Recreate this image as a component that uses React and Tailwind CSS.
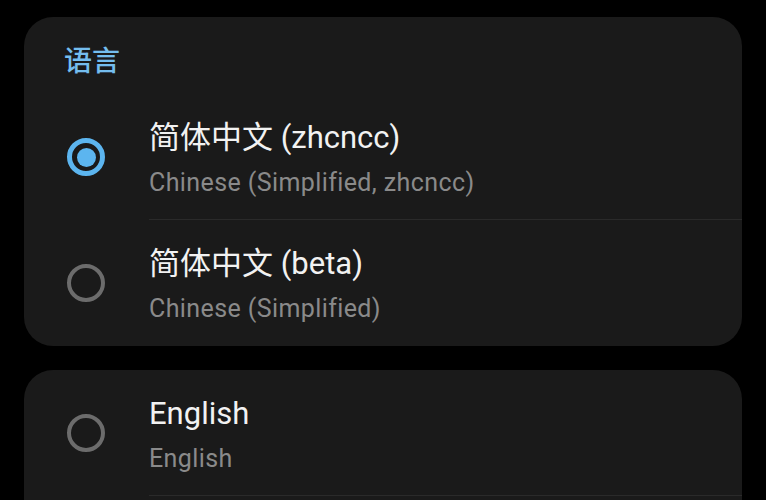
import React, { useState } from 'react';

const font = { fontFamily: 'Roboto, "Noto Sans CJK SC", sans-serif' };

function Radio({ checked }) {
  return checked ? (
    <div className="w-[38px] h-[38px] rounded-full border-[5px] border-[#5cb5ef] flex items-center justify-center">
      <div className="w-[19px] h-[19px] rounded-full bg-[#5cb5ef]" />
    </div>
  ) : (
    <div className="w-[38px] h-[38px] rounded-full border-[4px] border-[#6c6c6c]" />
  );
}

function Row({ title, subtitle, checked, divider, onClick }) {
  return (
    <div className="flex cursor-pointer" onClick={onClick}>
      <div className="flex items-center pl-[43px] pr-[44px]">
        <Radio checked={checked} />
      </div>
      <div
        className={
          'flex-1 flex flex-col pt-[24px] pb-[20px] ' +
          (divider ? 'border-b border-[#2a2a2a]' : 'border-b border-transparent')
        }
      >
        <div className="text-[31px] leading-[40px] text-[#f2f2f2]">{title}</div>
        <div className="mt-[9px] text-[25px] leading-[32px] tracking-[0.4px] text-[#8a8a8a]">
          {subtitle}
        </div>
      </div>
    </div>
  );
}

export default function App() {
  const [lang, setLang] = useState('zhcncc');

  return (
    <div className="h-screen bg-black pt-[17px] px-6 overflow-hidden" style={font}>
      {/* 中文 */}
      <section className="bg-[#1a1a1a] rounded-[29px] overflow-hidden">
        <div className="pl-[40px] pt-[27px] pb-[14px] text-[28px] leading-[36px] font-medium text-[#74bdee]">
          语言
        </div>
        <Row
          title="简体中文 (zhcncc)"
          subtitle="Chinese (Simplified, zhcncc)"
          checked={lang === 'zhcncc'}
          divider
          onClick={() => setLang('zhcncc')}
        />
        <Row
          title="简体中文 (beta)"
          subtitle="Chinese (Simplified)"
          checked={lang === 'beta'}
          onClick={() => setLang('beta')}
        />
      </section>

      {/* English */}
      <section className="mt-[24px] pb-[60px] bg-[#1a1a1a] rounded-t-[29px] overflow-hidden">
        <Row
          title="English"
          subtitle="English"
          checked={lang === 'en'}
          divider
          onClick={() => setLang('en')}
        />
      </section>
    </div>
  );
}
